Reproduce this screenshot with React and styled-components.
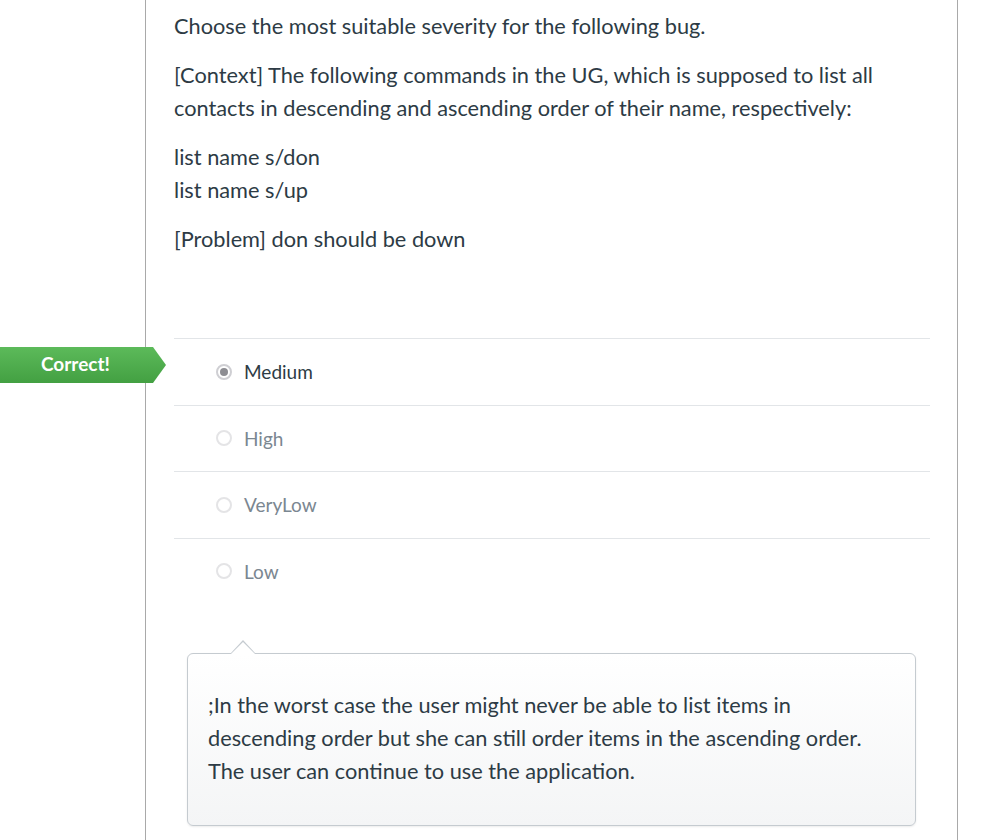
import React from 'react'
import styled, { createGlobalStyle } from 'styled-components'

const GlobalStyle = createGlobalStyle`
  html, body {
    margin: 0;
    padding: 0;
    background: #fff;
  }
  body {
    font-family: Lato, "Open Sans", "Liberation Sans", sans-serif;
    color: #2d3b45;
  }
`

const Page = styled.div`
  display: flex;
  min-height: 840px;
  padding-left: 145px;
  width: 986px;
  box-sizing: border-box;
  overflow: hidden;
`

const Column = styled.div`
  width: 813px;
  box-sizing: border-box;
  border-left: 1px solid #a9a9a9;
  border-right: 1px solid #a9a9a9;
  padding: 10px 27px 0 28px;
`

const QuestionText = styled.div`
  font-size: 21.75px;
  line-height: 33px;
  padding-bottom: 66px;

  p {
    margin: 0 0 16px;
  }
`

const Answers = styled.div`
  display: flex;
  flex-direction: column;
`

const AnswerRow = styled.div`
  position: relative;
  display: flex;
  align-items: center;
  gap: 12px;
  height: 66.5px;
  padding-left: 42px;
  box-sizing: border-box;
  border-top: 1px solid #e2e5e8;
  font-size: 19px;
  color: ${p => (p.$selected ? '#2d3b45' : '#7b8791')};
`

const Radio = styled.span`
  width: 16px;
  height: 16px;
  border-radius: 50%;
  box-sizing: border-box;
  border: 2px solid ${p => (p.$checked ? '#cfcfd3' : '#e4e4e6')};
  display: flex;
  align-items: center;
  justify-content: center;
  background: #fff;

  &::after {
    content: '';
    width: 8px;
    height: 8px;
    border-radius: 50%;
    background: ${p => (p.$checked ? '#8d8d92' : 'transparent')};
  }
`

const CorrectFlag = styled.div`
  position: absolute;
  left: -174px;
  top: 8px;
  width: 166px;
  height: 36px;
  display: flex;
  align-items: center;
  padding-left: 41px;
  box-sizing: border-box;
  background: linear-gradient(#5cba5a, #43a042);
  clip-path: polygon(0 0, 153px 0, 166px 50%, 153px 100%, 0 100%);
  color: #fff;
  font-size: 19px;
  font-weight: 700;
  line-height: 1;
  padding-bottom: 4px;
`

const Comment = styled.div`
  position: relative;
  margin: 49px 14px 0 13px;
  padding: 35px 20px 37px;
  border: 1px solid #c5cbd0;
  border-radius: 6px;
  background: linear-gradient(#ffffff, #f4f5f6);
  box-shadow: 0 1px 2px rgba(0, 0, 0, 0.08);
  font-size: 21.75px;
  line-height: 33px;

  &::before,
  &::after {
    content: '';
    position: absolute;
    left: 42px;
    width: 0;
    height: 0;
    border-left: 13px solid transparent;
    border-right: 13px solid transparent;
  }
  &::before {
    top: -14px;
    border-bottom: 14px solid #c5cbd0;
  }
  &::after {
    top: -12px;
    border-bottom: 13px solid #ffffff;
  }
`

const answers = [
  { label: 'Medium', selected: true },
  { label: 'High' },
  { label: 'VeryLow' },
  { label: 'Low' },
]

export default function App() {
  return (
    <>
      <GlobalStyle />
      <Page>
        <Column>
          <QuestionText>
            <p>Choose the most suitable severity for the following bug.</p>
            <p>
              [Context] The following commands in the UG, which is supposed to list all contacts in
              descending and ascending order of their name, respectively:
            </p>
            <p>
              list name s/don
              <br />
              list name s/up
            </p>
            <p>[Problem] don should be down</p>
          </QuestionText>
          <Answers>
            {answers.map(a => (
              <AnswerRow key={a.label} $selected={a.selected}>
                {a.selected && <CorrectFlag>Correct!</CorrectFlag>}
                <Radio $checked={a.selected} />
                {a.label}
              </AnswerRow>
            ))}
          </Answers>
          <Comment>
            ;In the worst case the user might never be able to list items in descending order but she
            can still order items in the ascending order. The user can continue to use the
            application.
          </Comment>
        </Column>
      </Page>
    </>
  )
}
